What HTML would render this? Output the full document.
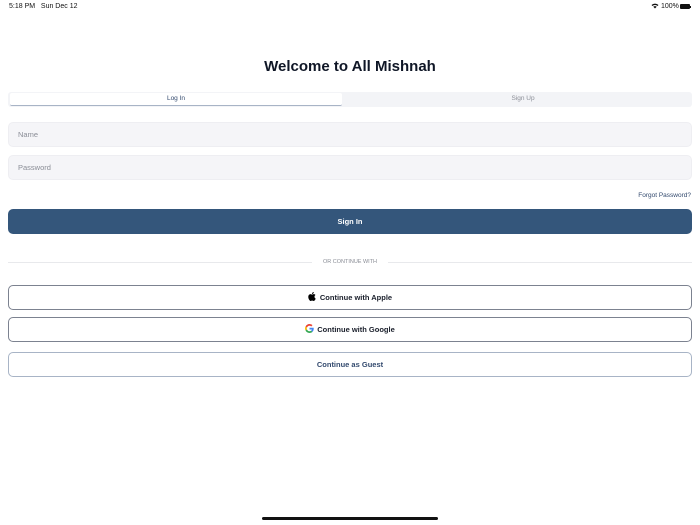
<!DOCTYPE html>
<html><head><style>
*{box-sizing:border-box;margin:0;padding:0}
body{width:700px;height:525px;background:#fff;font-family:"Liberation Sans",sans-serif;position:relative;overflow:hidden;color:#111}
.abs{position:absolute}
.sb{top:3px;font-size:7px;color:#111}
h1{position:absolute;top:58px;left:0;width:700px;text-align:center;font-size:15px;font-weight:bold;color:#0f1626}
.tabs{left:8px;top:92px;width:684px;height:15px;background:#f3f4f7;border-radius:3px}
.tab{top:93px;height:13px;font-size:6.5px;text-align:center;line-height:12px}
.inp{left:8px;width:684px;height:25px;background:#f5f5f8;border:1px solid #eeeef2;border-radius:5px;font-size:7.5px;color:#8a8d96;padding-left:9px;line-height:23px}
.btn{left:8px;width:684px;height:25px;border:1px solid #7c8290;border-radius:5px;font-size:7.5px;font-weight:bold;text-align:center;line-height:23px;color:#1a1f2b;background:#fff}
</style></head><body>
<div class="abs sb" style="left:9px">5:18 PM&nbsp;&nbsp; Sun Dec 12</div>
<div class="abs sb" style="left:651px">
<svg width="8" height="6" viewBox="0 0 8 6" style="vertical-align:-1px"><path d="M0.5 2 A5 5 0 0 1 7.5 2 L6.5 3 A3.6 3.6 0 0 0 1.5 3Z M2.3 3.8 A2.4 2.4 0 0 1 5.7 3.8 L4 5.5Z" fill="#111"/></svg> 100%</div>
<div class="abs" style="left:680px;top:4px;width:10px;height:5px;background:#111;border-radius:1px"></div>
<div class="abs" style="left:690px;top:5.5px;width:1px;height:2px;background:#111"></div>
<h1>Welcome to All Mishnah</h1>
<div class="abs tabs"></div>
<div class="abs tab" style="left:10px;width:332px;background:#fff;border-radius:2px;color:#334a6e;border-bottom:1.5px solid #a8b4c6">Log In</div>
<div class="abs tab" style="left:356px;width:334px;color:#8a8d96">Sign Up</div>
<div class="abs inp" style="top:122px">Name</div>
<div class="abs inp" style="top:155px">Password</div>
<div class="abs" style="right:9px;top:192px;font-size:6.5px;color:#334a6e">Forgot Password?</div>
<div class="abs btn" style="top:209px;background:#34567b;border-color:#34567b;color:#fff">Sign In</div>
<div class="abs" style="left:8px;top:262px;width:684px;height:1px;background:#e8e9ec"></div>
<div class="abs" style="left:312px;top:258px;width:76px;background:#fff;text-align:center;font-size:5.5px;line-height:8px;color:#8a8d96">OR CONTINUE WITH</div>
<div class="abs btn" style="top:285px"><svg width="8" height="9" viewBox="0 0 17 20" style="vertical-align:-1px;margin-right:4px"><path d="M14 10.6c0-2.6 2.1-3.800 2.2-3.900-1.200-1.800-3.100-2-3.700-2-1.600-.2-3.100.9-3.900.9-.8 0-2-.9-3.300-.9C3.600 4.700 2 5.700 1.100 7.300c-1.800 3.100-.5 7.700 1.300 10.200.9 1.200 1.900 2.600 3.200 2.500 1.300-.1 1.800-.8 3.300-.8 1.500 0 2 .8 3.300.8 1.400 0 2.300-1.200 3.100-2.500 1-1.400 1.400-2.800 1.400-2.900 0 0-2.700-1-2.700-4zM11.500 3c.7-.9 1.200-2 1-3.100-1 0-2.200.7-2.900 1.500-.6.700-1.200 1.900-1 3 1.100.1 2.200-.6 2.900-1.400z" fill="#000"/></svg>Continue with Apple</div>
<div class="abs btn" style="top:317px"><svg width="9" height="9" viewBox="0 0 48 48" style="vertical-align:-1px;margin-right:3px"><path fill="#EA4335" d="M24 9.5c3.5 0 6.600 1.200 9.100 3.600l6.800-6.800C35.800 2.400 30.300 0 24 0 14.600 0 6.600 5.400 2.700 13.200l7.900 6.200C12.500 13.700 17.800 9.500 24 9.500z"/><path fill="#4285F4" d="M46.500 24.500c0-1.600-.1-3.100-.4-4.500H24v9h12.600c-.5 2.900-2.200 5.400-4.700 7.100l7.700 6c4.500-4.200 6.900-10.300 6.900-17.600z"/><path fill="#FBBC05" d="M10.500 28.600c-.5-1.400-.8-3-.8-4.600s.3-3.200.8-4.600l-7.900-6.200C.9 16.600 0 20.200 0 24s.9 7.400 2.600 10.800l7.900-6.200z"/><path fill="#34A853" d="M24 48c6.500 0 11.900-2.100 15.900-5.800l-7.700-6c-2.200 1.500-5 2.300-8.200 2.300-6.200 0-11.500-4.200-13.400-9.900l-7.900 6.200C6.600 42.600 14.600 48 24 48z"/></svg>Continue with Google</div>
<div class="abs btn" style="top:352px;border-color:#a8b4c6;color:#334a6e">Continue as Guest</div>
<div class="abs" style="left:262px;top:517px;width:176px;height:3px;background:#111;border-radius:2px"></div>
</body></html>
